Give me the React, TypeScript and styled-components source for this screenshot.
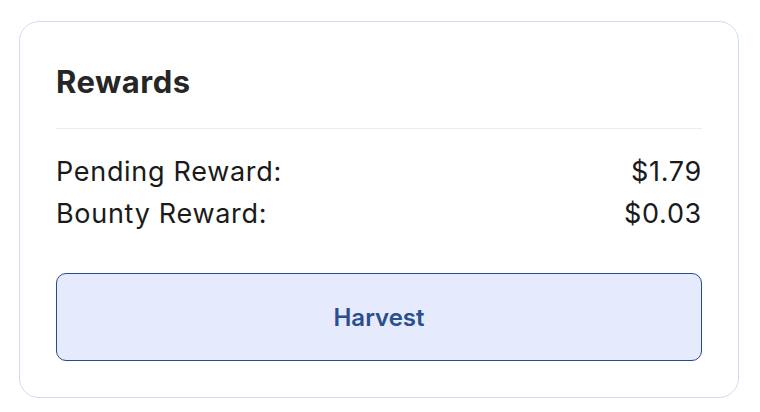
import React from "react";
import styled, { createGlobalStyle } from "styled-components";

const Global = createGlobalStyle`
  html, body { margin: 0; padding: 0; background: #ffffff; }
  body { font-family: Inter, "Noto Sans", sans-serif; }
`;

const Page = styled.div`
  padding: 21px 21px 14px 19px;
`;

const Card = styled.section`
  border: 1px solid #d0dbf7;
  border-radius: 20px;
  padding: 36px;
  background: #ffffff;
`;

const Title = styled.h2`
  margin: 0 0 22px;
  font-size: 31px;
  line-height: 48px;
  font-weight: 700;
  color: #262626;
  letter-spacing: 0.5px;
`;

const Divider = styled.hr`
  margin: 0 0 22px;
  border: none;
  border-top: 1px solid #ececec;
`;

const Rows = styled.div`
  display: flex;
  flex-direction: column;
  margin-bottom: 38px;
`;

const Row = styled.div`
  display: flex;
  justify-content: space-between;
  font-size: 27px;
  line-height: 42px;
  color: #1a1a1a;
  font-weight: 400;
  letter-spacing: 0.7px;
`;

const HarvestButton = styled.button`
  display: flex;
  align-items: center;
  justify-content: center;
  width: 100%;
  height: 88px;
  border: 1px solid #2a4a8a;
  border-radius: 10px;
  background: #e5ebfd;
  color: #2c4d8e;
  font-family: Inter, "Noto Sans", sans-serif;
  font-size: 24px;
  font-weight: 600;
  cursor: pointer;
`;

const rewards = [
  { label: "Pending Reward:", value: "$1.79" },
  { label: "Bounty Reward:", value: "$0.03" },
];

export default function App() {
  return (
    <>
      <Global />
      <Page>
        <Card>
          <Title>Rewards</Title>
          <Divider />
          <Rows>
            {rewards.map((r) => (
              <Row key={r.label}>
                <span>{r.label}</span>
                <span>{r.value}</span>
              </Row>
            ))}
          </Rows>
          <HarvestButton>Harvest</HarvestButton>
        </Card>
      </Page>
    </>
  );
}
